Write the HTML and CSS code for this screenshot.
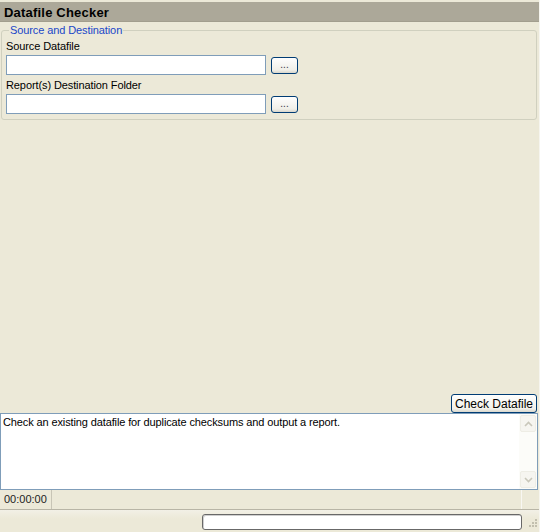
FILE: index.html
```html
<!DOCTYPE html>
<html lang="en">
<head>
    <meta charset="UTF-8">
    <title>Datafile Checker</title>
    <link rel="stylesheet" href="styles.css">
</head>
<body>
    <div class="window">
        <div class="titlebar">Datafile Checker</div>

        <fieldset class="group">
            <legend>Source and Destination</legend>
            <label class="field-label">Source Datafile</label>
            <div class="field-row">
                <div class="textbox"></div>
                <button class="browse-btn">...</button>
            </div>
            <label class="field-label">Report(s) Destination Folder</label>
            <div class="field-row">
                <div class="textbox"></div>
                <button class="browse-btn">...</button>
            </div>
        </fieldset>

        <div class="spacer"></div>

        <div class="actions">
            <button class="btn">Check Datafile</button>
        </div>

        <div class="log">
            <div class="log-text">Check an existing datafile for duplicate checksums and output a report.</div>
            <div class="scrollbar">
                <div class="scroll-btn">
                    <svg width="9" height="6" viewBox="0 0 9 6"><path d="M1 5 L4.5 1.5 L8 5" fill="none" stroke="#c9c7ba" stroke-width="1.6"/></svg>
                </div>
                <div class="scroll-track"></div>
                <div class="scroll-btn">
                    <svg width="9" height="6" viewBox="0 0 9 6"><path d="M1 1 L4.5 4.5 L8 1" fill="none" stroke="#c9c7ba" stroke-width="1.6"/></svg>
                </div>
            </div>
        </div>

        <div class="statusbar">
            <div class="status-panel timer">00:00:00</div>
            <div class="status-panel fill"></div>
        </div>

        <div class="footer">
            <div class="progress"></div>
            <div class="grip">
                <svg width="12" height="12" viewBox="0 0 12 12">
                    <g fill="#c2bfae">
                        <rect x="9" y="1" width="2" height="2"/>
                        <rect x="6" y="4" width="2" height="2"/>
                        <rect x="9" y="4" width="2" height="2"/>
                        <rect x="3" y="7" width="2" height="2"/>
                        <rect x="6" y="7" width="2" height="2"/>
                        <rect x="9" y="7" width="2" height="2"/>
                    </g>
                </svg>
            </div>
        </div>
    </div>
</body>
</html>
```

FILE: styles.css
```css
* {
    margin: 0;
    padding: 0;
    box-sizing: border-box;
}

body {
    font-family: "Liberation Sans", Arial, sans-serif;
    font-size: 11px;
    color: #000;
    background: #ece9d8;
}

.window {
    width: 540px;
    height: 532px;
    display: flex;
    flex-direction: column;
    border-right: 1px solid #f6f5ef;
}

.titlebar {
    margin-top: 2px;
    height: 20px;
    background: #aca899;
    font-size: 13px;
    font-weight: bold;
    letter-spacing: 0.2px;
    padding: 3px 0 0 4px;
    border-bottom: 1px solid #a29e8e;
}

.group {
    margin: 2px 2px 0 1px;
    border: 1px solid #d0d0bf;
    border-radius: 3px;
    padding: 0 4px 5px 4px;
    height: 96px;
}

.group legend {
    color: #2047c8;
    font-size: 11px;
    padding: 0 1px;
    margin-left: 3px;
    letter-spacing: -0.1px;
}

.field-label {
    display: block;
    margin-top: 4px;
    height: 15px;
    letter-spacing: -0.1px;
}

.field-row {
    display: flex;
    align-items: center;
    gap: 5px;
}

.textbox {
    width: 260px;
    height: 20px;
    background: #fff;
    border: 1px solid #7f9db9;
}

.browse-btn {
    width: 27px;
    height: 17px;
    font-family: inherit;
    font-size: 10px;
    color: #334;
    background: linear-gradient(#fefefe, #f0efe8 80%, #d8d6cc);
    border: 1px solid #003c74;
    border-radius: 3px;
    line-height: 12px;
}

.spacer {
    flex: 1;
}

.actions {
    display: flex;
    justify-content: flex-end;
    padding-right: 2px;
}

.btn {
    width: 86px;
    height: 19px;
    font-family: inherit;
    font-size: 12px;
    background: linear-gradient(#fefefe, #f2f1ea 80%, #d9d7cd);
    border: 1px solid #003c74;
    border-radius: 3px;
}

.log {
    height: 77px;
    margin-right: 1px;
    display: flex;
    background: #fff;
    border: 1px solid #7f9db9;
}

.log-text {
    flex: 1;
    padding: 2px 2px;
    letter-spacing: -0.12px;
}

.scrollbar {
    width: 18px;
    display: flex;
    flex-direction: column;
    background: #fcfcf9;
    padding: 1px;
}

.scroll-btn {
    height: 17px;
    display: flex;
    align-items: center;
    justify-content: center;
    border: 1px solid #eeede5;
    border-radius: 2px;
    background: #f6f5f0;
}

.scroll-track {
    flex: 1;
}

.statusbar {
    height: 20px;
    display: flex;
    border-bottom: 1px solid #b8b5a6;
}

.status-panel {
    height: 19px;
    padding: 3px 4px 0 4px;
    color: #222;
    font-size: 11px;
}

.timer {
    width: 52px;
    border-right: 1px solid #c8c5b6;
}

.fill {
    flex: 1;
    margin-right: 17px;
    border-right: 1px solid #f8f7f2;
}

.footer {
    height: 22px;
    display: flex;
    align-items: center;
    justify-content: flex-end;
    padding-top: 1px;
    background: linear-gradient(#f2f0e6, #ece9d8 40%);
}

.progress {
    width: 320px;
    height: 16px;
    background: #fff;
    border: 1px solid #686868;
    border-radius: 3px;
    box-shadow: inset 1px 1px 0 #cfcfcf;
    margin-right: 4px;
}

.grip {
    width: 13px;
    height: 16px;
    display: flex;
    align-items: flex-end;
}
```
